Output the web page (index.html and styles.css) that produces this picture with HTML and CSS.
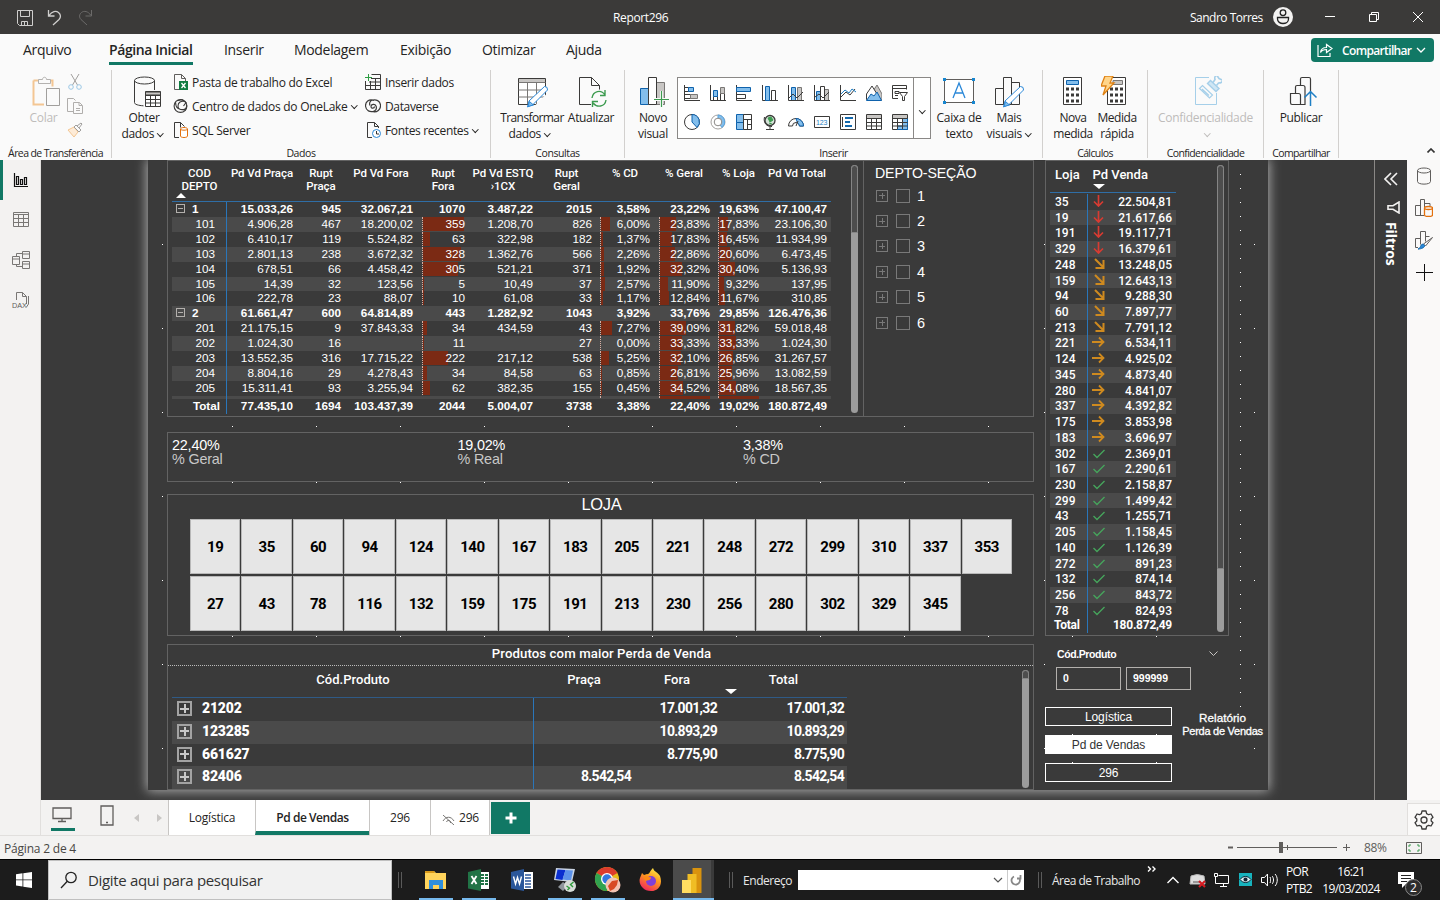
FILE: index.html
```html
<!DOCTYPE html>
<html lang="pt-BR">
<head>
<meta charset="utf-8">
<title>Report296</title>
<link rel="stylesheet" href="styles.css">
</head>
<body>
<div class="app">

<header class="titlebar">
  <svg class="quick" width="80" height="20" viewBox="0 0 80 20" fill="none" stroke="#d0cfce"><path d="M1.500 3.500h15v15h-13l-2-2zM4.500 3.500v6h9v-6M5.500 18.500v-4h6v4M8.500 15v3"/><path d="M32.500 3v6h6M33 8.500c3-4.500 7-5 9.500-3s2.500 5 .5 7L37 18" stroke-width="1.300"/><path d="M75.500 3v6h-6M75 8.500c-3-4.500-7-5-9.500-3s-2.500 5-.5 7L71 18" stroke="#6b6a69"/></svg>
  <span class="doc-name">Report296</span>
  <span class="user-name">Sandro Torres</span>
  <svg class="avatar" width="20" height="20" viewBox="0 0 20 20"><circle cx="10" cy="10" r="10" fill="#f3f2f1"/><circle cx="10" cy="5.700" r="2.800" fill="none" stroke="#222" stroke-width="1.300"/><path d="M4.500 10.500h11v1.500c0 6-11 6-11 0z" fill="none" stroke="#222" stroke-width="1.300"/></svg>
  <svg class="win-ctl" width="100" height="12" viewBox="0 0 100 12" fill="none" stroke="#fff"><path d="M0 5.500h10M44.500 3.500h7v7h-7zM46.500 3V1.500h7v7H52M88 1l10 10M98 1L88 11"/></svg>
</header>

<nav class="tabs">
  <span class="tab t1">Arquivo</span><span class="tab t2 active">Página Inicial</span><span class="tab t3">Inserir</span><span class="tab t4">Modelagem</span><span class="tab t5">Exibição</span><span class="tab t6">Otimizar</span><span class="tab t7">Ajuda</span>
  <button class="share"><svg width="16" height="16" viewBox="0 0 16 16" fill="none" stroke="#fff" stroke-width="1.200"><path d="M1 3v11.500h12V11M3.500 10.500c.5-4 3-5 6-5V2.500l5.500 4-5.500 4v-3c-3 0-4.500.5-6 3z"/></svg><span>Compartilhar</span><svg width="10" height="6" viewBox="0 0 10 6" fill="none" stroke="#fff" stroke-width="1.300"><path d="M1 1l4 4 4-4"/></svg></button>
</nav>

<section class="ribbon">
  <div class="group g1">
    <div class="tools">
      <div class="big off b-colar"><svg width="32" height="32" viewBox="0 0 32 32" fill="none"><path d="M4.500 4.500h19v6M15 28.500H4.500v-24" stroke="#f3c693" stroke-width="2"/><path d="M9.500 7.500v-4h4c0-3 4-3 4 0h4v4z" fill="#fafafa" stroke="#b4b2b0"/><path d="M17.500 12.500h13v17h-13z" fill="#fafafa" stroke="#a19f9d"/></svg><span>Colar</span></div>
      <div class="mini">
        <svg width="16" height="16" viewBox="0 0 16 16" fill="none" stroke="#a19f9d"><path d="M4 0l6.500 11M12 0L5.500 11"/><circle cx="4" cy="13" r="2.300" stroke="#9cc8e6"/><circle cx="12" cy="13" r="2.300" stroke="#9cc8e6"/></svg>
        <svg width="16" height="16" viewBox="0 0 16 16" fill="none" stroke="#b0aeac"><path d="M6 13.500H.5v-13h6l2 2M6.500 4.500h6l3 3v8h-9zM12 4.500v3h3M9 10.500h4M9 12.500h4"/></svg>
        <svg width="16" height="16" viewBox="0 0 16 16" fill="none"><path d="M1 8l6-3 4 5-4 5z" fill="#fdebd7" stroke="#f3c693"/><path d="M7 5l2-2 5 5-2 2zM10 4l4-3 1 1-3 4" stroke="#a19f9d"/></svg>
      </div>
    </div>
    <div class="caption">Área de Transferência</div>
  </div>

  <div class="group g2">
    <div class="tools">
      <div class="big b-obter"><svg width="32" height="32" viewBox="0 0 32 32" fill="none" stroke="#3b3a39"><ellipse cx="13.500" cy="4.500" rx="10" ry="3.500"/><path d="M3.500 4.500v22c0 2 4 3 9 3.300M23.500 4.500V14"/><path d="M14.500 15.500h15v15h-15z" fill="#fff"/><path d="M14.500 16h15v3h-15z" fill="#c8c6c4"/><path d="M14.500 19.500h15M14.500 23.500h15M14.500 27h15M19.500 19v11.500M24.500 19v11.500"/></svg><span>Obter</span><span>dados<i class="chev"></i></span></div>
      <div class="list l1">
        <div><svg width="16" height="16" viewBox="0 0 16 16" fill="none"><path d="M6 15.500H1.500V.5h7l4 4V7M8.500.5v4h4" stroke="#605e5c"/><path d="M6 7h9v9H6z" fill="#107c41"/><path d="M8.500 9l4 5M12.500 9l-4 5" stroke="#fff" stroke-width="1.300"/></svg><span>Pasta de trabalho do Excel</span></div>
        <div><svg width="16" height="16" viewBox="0 0 16 16" fill="none" stroke="#3b3a39" stroke-width="1.100"><circle cx="7.500" cy="8" r="6.400"/><path d="M2.500 4c0 6 3 8.500 10.500 8M12 3.500c-4-1-7 1-7 4.500s3 4 5.500 3.500S14 9 13.500 7M5 2.500l4-1 4 3-2.500 3.500"/></svg><span>Centro de dados do OneLake<i class="chev"></i></span></div>
        <div><svg width="16" height="16" viewBox="0 0 16 16" fill="none"><path d="M6 15.500H1.500V.5h6l4 4M7.500.5v5" stroke="#3b3a39"/><path d="M7.500 7v7c0 2 7 2 7 0V7c0-2-7-2-7 0c0 1.600 7 1.600 7 0" fill="#fff" stroke="#e3700c"/></svg><span>SQL Server</span></div>
      </div>
      <div class="list l2">
        <div><svg width="16" height="16" viewBox="0 0 16 16" fill="none" stroke="#3b3a39"><path d="M6.500.5h9v15H.5V7M6 4.500h9.500M4 8h11.500M.5 11.500h15M5.500 7v8.500M10.500 4v11.500"/><path d="M3.500 0v7M0 3.500h7" stroke="#2f9e44"/></svg><span>Inserir dados</span></div>
        <div><svg width="16" height="16" viewBox="0 0 16 16" fill="none" stroke="#3b3a39" stroke-width="1.200"><path d="M9 2.500C4 .5 0 4 .600 8.500S5 14 8 13.500s4-3 3-5.500-5-2-5 .5 3.500 2 3.500 0M7 13.500c5 1.500 9-2 8.500-6.500S11 1.500 8 2 4 5 5 7.500"/></svg><span>Dataverse</span></div>
        <div><svg width="16" height="16" viewBox="0 0 16 16" fill="none"><path d="M7 15.500H2.500V.5h7l4 4V6M9.500.5v4h4" stroke="#3b3a39"/><circle cx="11.500" cy="11.500" r="4" fill="#fff" stroke="#2b88d8"/><path d="M11.500 9v3h2.500" stroke="#333"/></svg><span>Fontes recentes<i class="chev"></i></span></div>
      </div>
    </div>
    <div class="caption">Dados</div>
  </div>

  <div class="group g3">
    <div class="tools">
      <div class="big b-transf"><svg width="32" height="32" viewBox="0 0 32 32" fill="none"><path d="M2.500 2.500h27v26h-27z" fill="#fff" stroke="#3b3a39"/><path d="M3 3h26v3H3z" fill="#c8c6c4"/><path d="M2.500 6.500h27M2.500 14h27M2.500 21h27M11.500 7v21M20.500 7v21" stroke="#797775"/><path d="M20 28.500l10-10V30H18z" fill="#fafafa"/><path d="M28.500 10.500q3.500 0 3 3.500L17 28.500 11.500 31l1.500-6z" fill="#fff" stroke="#2b88d8"/><path d="M12 30.500l1.500-5 4 3.500z" fill="#83beec" stroke="#2b88d8"/></svg><span>Transformar</span><span>dados<i class="chev"></i></span></div>
      <div class="big b-atual"><svg width="32" height="32" viewBox="0 0 32 32" fill="none"><path d="M16 28.500H4.500v-27h12l8 8v4M16.500 1.500v8h8" stroke="#3b3a39"/><path d="M17 22c1-7 9-9 13-3M30 14v5.500h-5M31 24c-1 7-9 8-13 3M17.500 31v-5.500H23" stroke="#3d9b50" stroke-width="1.400"/></svg><span>Atualizar</span></div>
    </div>
    <div class="caption">Consultas</div>
  </div>

  <div class="group g4">
    <div class="tools">
      <div class="big b-novo"><svg width="32" height="32" viewBox="0 0 32 32" fill="none"><path d="M3.500 12.500h8v16h-8z" fill="#83beec" stroke="#0f62ac"/><path d="M19.500 6.500h8v22h-8z" fill="#c8c6c4" stroke="#797775"/><path d="M11.500 1.500h8v27h-8z" fill="#fff" stroke="#3b3a39"/><path d="M24.500 15v16M17 23.500h15" stroke="#fafafa" stroke-width="3"/><path d="M24.500 15v16M17 23.500h15" stroke="#3d9b50" stroke-width="1.200"/></svg><span>Novo</span><span>visual</span></div>
      <div class="gallery">
        <div class="gal-grid" id="gallery"></div>
        <div class="gal-more"><i class="chev"></i></div>
      </div>
      <div class="big b-caixa"><svg width="32" height="32" viewBox="0 0 32 32" fill="none"><path d="M1.500 3.500h29v23h-29z" fill="#fff" stroke="#605e5c"/><path d="M0 2h3v3H0zM29 2h3v3h-3zM0 25h3v3H0zM29 25h3v3h-3z" fill="#1686d0"/><path d="M10 22l6-15 6 15M12 17h8" stroke="#2b88d8" stroke-width="1.300"/></svg><span>Caixa de</span><span>texto</span></div>
      <div class="big b-mais"><svg width="32" height="32" viewBox="0 0 32 32" fill="none" stroke="#3b3a39"><path d="M2.500 12.500h8v16h-8zM10.500 1.500h8v27h-8zM18.500 6.500h8v22h-8z" fill="#fafafa"/><path d="M27.500 10.500q3.500 0 3 3.500L16 28.500 10.500 31l1.500-6z" fill="#fff" stroke="#2b88d8"/><path d="M11 30.500l1.500-5 4 3.500z" fill="#83beec" stroke="#2b88d8"/></svg><span>Mais</span><span>visuais<i class="chev"></i></span></div>
    </div>
    <div class="caption">Inserir</div>
  </div>

  <div class="group g5">
    <div class="tools">
      <div class="big b-calc"><svg width="32" height="32" viewBox="0 0 32 32" fill="none"><path d="M6.500 1.500h18v27h-18z" fill="#fff" stroke="#3b3a39"/><path d="M9.500 4.500h12v4h-12z" fill="#83beec" stroke="#0f62ac"/><path d="M9 13h13M9 19h13M9 25h13" stroke="#3b3a39" stroke-width="3" stroke-dasharray="3 2"/></svg><span>Nova</span><span>medida</span></div>
      <div class="big b-calc"><svg width="32" height="32" viewBox="0 0 32 32" fill="none"><path d="M6.500 1.500h18v27h-18z" fill="#fff" stroke="#3b3a39"/><path d="M12 4.500h9.500v4H12z" fill="#c8c6c4" stroke="#797775"/><path d="M9 13h13M9 19h13M9 25h13" stroke="#3b3a39" stroke-width="3" stroke-dasharray="3 2"/><path d="M4 0h8l-3 7h4L2 19l3-9H0z" fill="#ffd58a" stroke="#e08214" stroke-width="1.300"/></svg><span>Medida</span><span>rápida</span></div>
    </div>
    <div class="caption">Cálculos</div>
  </div>

  <div class="group g6">
    <div class="tools">
      <div class="big off b-wide"><svg width="32" height="32" viewBox="0 0 32 32" fill="none" stroke="#a5cfe9"><path d="M19 1.500H5.500v27h21V17"/><path d="M9.500 12.500l3-3 10 9.500-3 3zM12 13l7 6.500" stroke-width="1.200"/><path d="M17.500 7.500l3-3 8.500 8-3 3z" fill="#cfe6f4" stroke-width="1.400"/><path d="M23 6.500l2-3q-1-3.500 2-4l2 3 3.500 1.500q0 3-4 3l-2 2.500" stroke-width="1.600"/></svg><span>Confidencialidade</span><span><i class="chev"></i></span></div>
    </div>
    <div class="caption">Confidencialidade</div>
  </div>

  <div class="group g7">
    <div class="tools">
      <div class="big b-wide b-pub"><svg width="32" height="32" viewBox="0 0 32 32" fill="none" stroke="#3b3a39" stroke-width="1.200"><path d="M14 28.500H3q-1.500 0-1.500-2V17.500h8q2 0 2 2v9M6.500 17V11q0-1.500 1.500-1.500h6q2 0 2 2V28.500H11M11.500 9V3q0-1.500 1.500-1.500h7q1.500 0 1.500 1.500v12"/><path d="M21.500 30V15M15.500 21.500l6-6 6 6" stroke="#1f7fc4" stroke-width="1.500"/></svg><span>Publicar</span></div>
    </div>
    <div class="caption">Compartilhar</div>
  </div>
  <svg class="collapse" width="8" height="5" viewBox="0 0 8 5" fill="none" stroke="#333" stroke-width="1.600"><path d="M.5 4.500L4 1l3.500 3.500"/></svg>
</section>

<main class="work">
  <aside class="rail-left">
    <div class="rail-item on"><svg width="16" height="16" viewBox="0 0 16 16" fill="none" stroke="#111" stroke-width="1.200"><path d="M1.500 1v13.500H15M3.500 4.500h2v8h-2zM7.500 7.500h2v5h-2zM11.500 5.500h2v7h-2z"/></svg></div>
    <div class="rail-item"><svg width="18" height="16" viewBox="0 0 18 16" fill="none" stroke="#797775"><path d="M1.500.5h15v14h-15zM1.500 2.500h15M1.500 6.500h15M1.500 10.500h15M6.500 2.500v12M11.500 2.500v12"/></svg></div>
    <div class="rail-item"><svg width="18" height="18" viewBox="0 0 18 18" fill="none" stroke="#797775"><path d="M.5 5.500h7v8h-7zM.5 8h7M10.500.5h7v7h-7zM10.500 3h7M10.500 10.500h7v7h-7zM10.500 13h7M4.500 5.500v-3h6M4.500 13.500v2h6"/></svg></div>
    <div class="rail-item"><svg width="18" height="18" viewBox="0 0 18 18" fill="none" stroke="#797775"><path d="M4.500 9V1.500h6l4 4V13M10.500 1.500v4h4M16.500 5v8l-2 3"/><text x="0" y="17" font-size="7" textLength="15" lengthAdjust="spacingAndGlyphs" font-family="Liberation Sans" fill="#605e5c" stroke="none">DAX</text></svg></div>
  </aside>

  <div class="canvas">
    <article class="page">
      <svg class="dots" width="1120" height="630"><defs>
        <pattern id="dx" width="84" height="630" patternUnits="userSpaceOnUse"><path d="M0 266h1v1H0zM0 322h1v1H0zM0 476h1v1H0z" fill="#fff"/></pattern>
        <pattern id="dy" width="1120" height="84" patternUnits="userSpaceOnUse"><path d="M14 0h1v1h-1zM714 0h1v1h-1zM896 0h1v1h-1zM1106 0h1v1h-1z" fill="#fff"/></pattern>
        <pattern id="dz" width="1120" height="14" patternUnits="userSpaceOnUse"><path d="M1092 0h1v1h-1z" fill="#fff"/></pattern></defs>
        <g><rect x="0" y="0" width="1009" height="546" fill="url(#dx)" transform="translate(84 0)"/><rect y="0" width="1120" height="546" fill="url(#dy)" transform="translate(0 84)"/><rect y="0" width="1120" height="546" fill="url(#dz)" transform="translate(0 14)"/><path d="M924 574h1v1h-1zM1008 574h1v1h-1zM924 602h1v1h-1zM1008 602h1v1h-1z" fill="#fff"/></g></svg>
      <div class="col-main">
        <section class="panel top-panel">
          <div class="matrix">
            <div class="m-row m-head"><span>COD<br>DEPTO<i class="tri up"></i></span><span>Pd Vd Praça</span><span>Rupt<br>Praça</span><span>Pd Vd Fora</span><span>Rupt<br>Fora</span><span>Pd Vd ESTQ<br>›1CX</span><span>Rupt<br>Geral</span><span>% CD</span><span>% Geral</span><span>% Loja</span><span>Pd Vd Total</span></div>
            <div class="m-body" id="matrix"></div>
            <div class="m-total" id="matrixTotal"></div>
          </div>
          <div class="scroll s1"><b></b></div>
          <div class="slicer">
            <div class="slicer-title">DEPTO-SEÇÃO</div>
            <div class="s-item"><em></em><u></u>1</div><div class="s-item"><em></em><u></u>2</div><div class="s-item"><em></em><u></u>3</div><div class="s-item"><em></em><u></u>4</div><div class="s-item"><em></em><u></u>5</div><div class="s-item"><em></em><u></u>6</div>
          </div>
        </section>
        <section class="panel cards">
          <div><b>22,40%</b><span>% Geral</span></div><div><b>19,02%</b><span>% Real</span></div><div><b>3,38%</b><span>% CD</span></div>
        </section>
        <section class="panel tiles-panel"><h3>LOJA</h3><div class="tiles" id="tiles"></div></section>
        <section class="panel prod-panel">
          <h4>Produtos com maior Perda de Venda</h4>
          <div class="prod-wrap">
            <div class="prod">
              <div class="p-row p-head"><span>Cód.Produto</span><span>Praça</span><span>Fora</span><span>Total<i class="tri"></i></span></div>
              <div class="p-row"><span><em class="plus"></em>21202</span><span></span><span>17.001,32</span><span>17.001,32</span></div>
              <div class="p-row band"><span><em class="plus"></em>123285</span><span></span><span>10.893,29</span><span>10.893,29</span></div>
              <div class="p-row"><span><em class="plus"></em>661627</span><span></span><span>8.775,90</span><span>8.775,90</span></div>
              <div class="p-row band"><span><em class="plus"></em>82406</span><span>8.542,54</span><span></span><span>8.542,54</span></div>
            </div>
            <div class="scroll s3"><b></b></div>
          </div>
        </section>
      </div>
      <div class="col-side">
        <section class="panel loja-panel">
          <div class="loja">
            <div class="l-head"><span>Loja</span><span>Pd Venda<i class="tri"></i></span></div>
            <div class="l-body" id="loja"></div>
            <div class="l-total"><span>Total</span><span>180.872,49</span></div>
          </div>
          <div class="scroll s2"><b></b></div>
        </section>
        <section class="range"><div class="range-title"><span>Cód.Produto</span><svg width="9" height="6" viewBox="0 0 9 6" fill="none" stroke="#c8c6c4"><path d="M.5.500l4 4 4-4"/></svg></div><div class="range-boxes"><div>0</div><div>999999</div></div></section>
        <section class="nav-area"><div class="nav-btns"><div>Logística</div><div class="sel">Pd de Vendas</div><div>296</div></div><div class="nav-title">Relatório<br><small>Perda de Vendas</small></div></section>
      </div>
    </article>
  </div>

  <aside class="filters">
    <svg width="14" height="14" viewBox="0 0 14 14" fill="none" stroke="#f3f2f1" stroke-width="1.600"><path d="M7 1L1 7l6 6M13 1L7 7l6 6"/></svg>
    <svg width="13" height="13" viewBox="0 0 13 13" fill="none" stroke="#f3f2f1" stroke-width="1.600"><path d="M12 1v11L6 8.300H1V4.700h5z"/></svg>
    <span>Filtros</span>
  </aside>
  <aside class="rail-right">
    <svg width="16" height="18" viewBox="0 0 16 18" fill="none" stroke="#605e5c"><ellipse cx="8" cy="3.500" rx="6.500" ry="2.500"/><path d="M1.500 3.500v11c0 3.500 13 3.500 13 0v-11"/></svg>
    <svg width="18" height="18" viewBox="0 0 18 18" fill="none" stroke="#605e5c"><path d="M9 16.500H.5v-10h5v10M5.500 7V.5h4v16M10 4.500h5V7"/><path d="M9.500 9v7c0 2 8 2 8 0V9c0-2-8-2-8 0c0 2 8 2 8 0" fill="#faf9f8" stroke="#e3700c" stroke-width="1.300"/></svg>
    <svg width="18" height="19" viewBox="0 0 18 19" fill="none" stroke="#605e5c"><path d="M3 16.500H.5v-9h5v6M5.500 8V.5h5v10M10.500 5.500h4"/><path d="M17.500 6.500l-7 8.500-2-2z" fill="#fff"/><path d="M3 18c3 0 2-5 5-5 4 2 0 5-5 5z" fill="#2b88d8" stroke="#1469ad"/></svg>
    <svg width="17" height="17" viewBox="0 0 17 17" stroke="#111"><path d="M8.500 0v17M0 8.500h17"/></svg>
  </aside>
</main>

<footer class="pagebar">
  <div class="pb-left"></div>
  <div class="pb-icons">
    <svg width="20" height="16" viewBox="0 0 20 16" fill="none" stroke="#605e5c" stroke-width="1.300"><path d="M1 1h18v10.500H1zM10 12v2M6 14.500h8"/></svg>
    <svg width="14" height="21" viewBox="0 0 14 21" fill="none" stroke="#605e5c" stroke-width="1.300"><path d="M1 1h12v19H1z"/><path d="M6 17.500h2"/></svg>
    <svg width="28" height="8" viewBox="0 0 28 8" fill="#c8c6c4"><path d="M5 0v8L0 4zM23 0v8l5-4z"/></svg>
  </div>
  <div class="ptab w1">Logística</div><div class="ptab w2 cur">Pd de Vendas</div><div class="ptab w3">296</div><div class="ptab w4"><svg width="13" height="10" viewBox="0 0 13 10" fill="none" stroke="#797775"><path d="M1 0l11 10M1 6c3-5 8-5 11 0M4.500 7a2 2 0 1 1 4 1"/></svg>296</div>
  <div class="add"><svg width="12" height="12" viewBox="0 0 12 12" stroke="#fff" stroke-width="3"><path d="M6 .500v11M.500 6h11"/></svg></div>
  <div class="gear"><svg width="20" height="20" viewBox="0 0 20 20" fill="none" stroke="#3b3a39" stroke-width="1.300" stroke-linejoin="round"><path d="M8 1h4l.6 2.600 2 1.100L17 4l2 3.300L17.200 9v2L19 12.700 17 16l-2.400-.7-2 1.100L12 19H8l-.6-2.600-2-1.100L3 16l-2-3.300L2.800 11V9L1 7.300 3 4l2.400.7 2-1.100z"/><circle cx="10" cy="10" r="3"/></svg></div>
</footer>

<div class="status"><span class="pg">Página 2 de 4</span>
  <svg class="zoomctl" width="122" height="12" viewBox="0 0 122 12" stroke="#605e5c" fill="none"><path d="M0 6.500h5" stroke-width="2"/><path d="M9 6.500h100M59.500 4v5M115 6.500h7M118.500 3v7"/><path d="M51 1h4v11h-4z" fill="#605e5c" stroke="none"/></svg>
  <span class="pct">88%</span>
  <svg width="16" height="12" viewBox="0 0 16 12" fill="none" stroke="#605e5c"><path d="M.5.500h15v11H.500z"/><path d="M3 5V3h2M11 3h2v2M13 7v2h-2M5 9H3V7" stroke="#3d9b50"/></svg>
</div>

<div class="taskbar">
  <div class="start"><svg width="16" height="16" viewBox="0 0 16 16" fill="#fff"><path d="M0 2.200l6.500-.9v6.200H0zM7.300 1.200L16 0v7.500H7.300zM0 8.300h6.500v6.200L0 13.600zM7.300 8.300H16V16l-8.700-1.300z"/></svg></div>
  <div class="search"><svg width="18" height="18" viewBox="0 0 18 18" fill="none" stroke="#222" stroke-width="1.300"><circle cx="11" cy="6.500" r="5.200"/><path d="M7.300 10.300L1 17"/></svg><span>Digite aqui para pesquisar</span></div>
  <i class="grip g-a"></i>
  <div class="apps">
    <div class="run"><svg width="24" height="24" viewBox="0 0 24 24"><path d="M1 3h9l2 2h10v16H1z" fill="#ffd45c"/><path d="M1 3h9l1 2H1z" fill="#d99a1b"/><path d="M5 12h14v9h-4v-4H9v4H5z" fill="#2f8fdd"/></svg></div>
    <div class="run"><svg width="24" height="24" viewBox="0 0 24 24"><path d="M12 4h10v17H12z" fill="#fff"/><path d="M14 6h3v2h-3zM18 6h3v2h-3zM14 9h3v2h-3zM18 9h3v2h-3zM14 12h3v2h-3zM18 12h3v2h-3zM14 15h3v2h-3zM18 15h3v2h-3z" fill="#217346"/><path d="M1 4l13-3v22L1 20.500z" fill="#217346"/><path d="M4.500 8l5 8M9.500 8l-5 8" stroke="#fff" stroke-width="1.800"/></svg></div>
    <div><svg width="24" height="24" viewBox="0 0 24 24"><path d="M12 4h11v17H12z" fill="#fff"/><path d="M15 7h6M15 10h6M15 13h6M15 16h6M15 19h6" stroke="#2b579a" stroke-width="1.400"/><path d="M1 4l13-3v22L1 20.500z" fill="#2b579a"/><path d="M3.500 8.500L5.500 16l2-6.500 2 6.500 2-7.500" fill="none" stroke="#fff" stroke-width="1.400"/></svg></div>
    <div class="run"><svg width="24" height="26" viewBox="0 0 24 26"><path d="M3 1l19 1-3 13L1 13z" fill="#c9d4e4"/><path d="M4.500 2.500l8 .5-3 10-7-1z" fill="#0a2fd0"/><path d="M12.500 3l7.500.5-2 10-8.500-1z" fill="#5c92ea"/><path d="M5 20l5-5 5 4-5 5z" fill="#8f959b"/><circle cx="17" cy="19" r="6" fill="#d8dcd8"/><path d="M13.500 19l3 2-2 2M20.500 15l-3 2.500 2.500 2.500" fill="none" stroke="#2e9a3a" stroke-width="1.400"/></svg></div>
    <div class="run two"><svg width="28" height="28" viewBox="0 0 28 28"><circle cx="13" cy="13" r="12" fill="#e8b91c"/><path d="M13 13L2.600 7A12 12 0 0 1 23.400 7z" fill="#dd3b2d"/><path d="M13 13L2.600 7A12 12 0 0 0 13 25z" fill="#31a350"/><circle cx="13" cy="13" r="6" fill="#fff"/><circle cx="13" cy="13" r="4.700" fill="#3577e0"/><circle cx="19" cy="19" r="7.500" fill="#f3c3b3"/><path d="M18 15l6-1-1 5-3 4-4 2-2-5z" fill="#d84a24"/></svg></div>
    <div><svg width="24" height="24" viewBox="0 0 24 24"><defs><linearGradient id="ff" x1=".8" y1="0" x2=".3" y2="1"><stop offset="0" stop-color="#fff04a"/><stop offset=".45" stop-color="#ff9a1f"/><stop offset="1" stop-color="#f0265c"/></linearGradient></defs><path d="M3 5l2 2 3-1c2 1 3-3 6-6 1 4 5 4 7 8 3 8-1 15-9 15S-1 16 1 10z" fill="url(#ff)"/><circle cx="12" cy="13" r="5" fill="#8040d8"/><path d="M4 9c4-2 6 1 8 0 0 4-4 3-5 4z" fill="#ff8a16"/></svg></div>
    <div class="run cur"><svg width="20" height="25" viewBox="0 0 20 25"><path d="M10.500 0h9v25h-9z" fill="#d9930e"/><path d="M5.500 6h9v19h-9z" fill="#f0bd24"/><path d="M0 12h9v13H0z" fill="#ffdd61"/></svg></div>
  </div>
  <i class="grip g-b"></i>
  <span class="tb-label addr">Endereço</span>
  <div class="addr-box"><svg width="10" height="6" viewBox="0 0 10 6" fill="none" stroke="#555" stroke-width="1.200"><path d="M1 1l4 4 4-4"/></svg><b><svg width="12" height="12" viewBox="0 0 12 12" fill="none" stroke="#888" stroke-width="1.800"><path d="M4 2.500a4.200 4.200 0 1 0 5.500 2M7 4.500h3.500V1"/></svg></b></div>
  <i class="grip g-c"></i>
  <span class="tb-label desk">Área de Trabalho</span>
  <svg class="more" width="10" height="6" viewBox="0 0 10 6" fill="none" stroke="#fff" stroke-width="1.400"><path d="M1 .500L3.500 3 1 5.500M5.500.500L8 3 5.500 5.500"/></svg>
  <svg class="tray" width="104" height="18" viewBox="0 0 104 18" fill="none" stroke="#fff"><path d="M.5 12L6 6.500l5.500 5.500" stroke-width="1.400"/><path d="M24 5q6-3 13 0l1 8H23z" fill="#ddd" stroke="#bbb"/><path d="M26 11h8" stroke="#555"/><path d="M32 10l6 6M38 10l-6 6" stroke="#d61a20" stroke-width="2"/><path d="M51.500 4.500h10v8h-13v-4M53 15.500h7M56.500 13v2M47.500 2.500h3v3h-3zM48.500 6v3"/><path d="M72 2h13v13H72z" fill="#17b3bd" stroke="none"/><path d="M73 8.500c3-4 8-4 11 0-3 4-8 4-11 0z" fill="#d8f1f3" stroke="#123"/><circle cx="78.500" cy="8.500" r="2" fill="#123" stroke="none"/><path d="M94.500 6.500h3l3-3.500v12l-3-3.500h-3zM103 6c1 2 1 4 0 6"/></svg>
  <svg class="waves" width="8" height="14" viewBox="0 0 8 14" fill="none" stroke="#fff"><path d="M0 3c2 2 2 6 0 8M3 1c3 3 3 9 0 12"/></svg>
  <div class="clock lang">POR<br>PTB2</div>
  <div class="clock">16:21<br>19/03/2024</div>
  <div class="notif"><svg width="18" height="16" viewBox="0 0 18 16"><path d="M0 0h16v12h-8l-4 4v-4H0z" fill="#fff"/><path d="M3 3.500h10M3 6.500h10M3 9.500h6" stroke="#222"/></svg><b>2</b></div>
</div>
</div>
<script src="app.js"></script>
</body>
</html>
```
FILE: styles.css
```css
* { box-sizing: border-box; }
body { margin: 0; font-family: "Open Sans", "Noto Sans", sans-serif; color: #252423; }
svg { display: block; flex: none; }
i, em, u { font-style: normal; text-decoration: none; }
.app { width: 1440px; height: 900px; overflow: hidden; display: flex; flex-direction: column; background: #fafafa; }
.app > * { flex: none; }

/* title bar */
.titlebar { height: 34px; background: #3b3a39; display: flex; align-items: center; color: #fff; font-size: 12px; letter-spacing: -.35px; }
.quick { margin-left: 16px; margin-top: -1px; }
.doc-name { margin-left: 517px; width: 577px; padding-top: 1px; }
.user-name { width: 83px; white-space: nowrap; padding-top: 1px; letter-spacing: -.5px; }
.win-ctl { margin-left: 32px; }

/* ribbon tabs */
.tabs { height: 32px; display: flex; font-size: 14px; position: relative; padding-left: 23px; letter-spacing: -.32px; }
.tab { height: 31px; line-height: 32px; white-space: nowrap; }
.tab.active { font-weight: 600; border-bottom: 3px solid #117865; letter-spacing: -.4px; }
.t1 { width: 86px; } .t2 { width: 84px; margin-right: 31px; } .t3 { width: 70px; } .t4 { width: 106px; } .t5 { width: 82px; } .t6 { width: 84px; }
.share { position: absolute; left: 1311px; top: 4px; width: 123px; height: 24px; border: 0; border-radius: 4px; background: #117865; color: #fff; display: flex; align-items: center; padding: 0 0 0 6px; font: 600 12px "Open Sans", sans-serif; letter-spacing: -.65px; }
.share span { width: 74px; margin-left: 9px; text-align: left; white-space: nowrap; }

/* ribbon */
.ribbon { height: 94px; display: flex; position: relative; font-size: 12px; letter-spacing: -.2px; padding-top: 4px; }
.group { height: 88px; border-right: 1px solid #d2d0ce; }
.g1 { width: 112px; } .g2 { width: 379px; } .g3 { width: 134px; } .g4 { width: 418px; } .g5 { width: 105px; } .g6 { width: 116px; } .g7 { width: 75px; }
.tools { height: 77px; display: flex; padding-top: 6px; }
.caption { height: 13px; line-height: 13px; font-size: 10.500px; text-align: center; white-space: nowrap; letter-spacing: -.6px; }
.g2 .caption, .g3 .caption, .g4 .caption { letter-spacing: -.4px; }
.big { display: flex; flex-direction: column; align-items: center; line-height: 16px; letter-spacing: -.32px; }
.big svg { margin-bottom: 2px; }
.big span { white-space: nowrap; }
.off { color: #bebcba; }
.chev { display: inline-block; width: 4.500px; height: 4.500px; border: solid currentColor; border-width: 0 1.500px 1.500px 0; transform: rotate(45deg); margin: 0 1px 3px 4px; }
.g1 .b-colar { width: 55px; margin-left: 16px; }
.b-colar svg { margin-left: 2px; }
.mini { display: flex; flex-direction: column; gap: 8px; margin-left: -4px; margin-top: -2px; }
.b-obter { width: 64px; }
.b-obter svg { margin-left: 5px; }
.b-obter span:last-child { margin-left: -3px; }
.b-transf { letter-spacing: -.6px; }
.b-transf span:last-child { margin-left: -5px; letter-spacing: -.4px; }
.b-pub svg { margin-left: 7px; }
.list { display: flex; flex-direction: column; margin-top: -6px; white-space: nowrap; letter-spacing: -.28px; }
.list > div { height: 24px; display: flex; align-items: center; gap: 3px; }
.l1 { margin-left: -3px; width: 192px; }
.l2 > div { gap: 4px; }
.l2 { letter-spacing: -.35px; }
.b-transf { width: 82px; } .b-atual { width: 36px; }
.b-novo { width: 48px; margin-left: 4px; }
.b-caixa { width: 56px; } .b-mais { width: 44px; }
.g5 .tools { padding-left: 8px; } .b-calc { width: 44px; letter-spacing: -.45px; }
.b-wide { width: 100%; }
.gallery { width: 254px; height: 62px; margin-top: 1px; border: 1px solid #8a8886; background: #fff; display: flex; }
.gal-grid { width: 236px; display: grid; grid-template-columns: repeat(9, 26px); grid-template-rows: 29px 29px; padding-left: 1px; padding-top: 0; place-items: center; }
.gal-more { border-left: 1px solid #8a8886; width: 17px; display: grid; place-items: center; }
.gal-more .chev { margin: 4px 0 0; }
.collapse { position: absolute; left: 1427px; top: 82px; }

/* work area */
.work { height: 640px; display: flex; background: #3a3a3a; }
.rail-left { width: 41px; background: #f3f2f1; border-right: 1px solid #e1dfdd; }
.rail-item { height: 40px; display: grid; place-items: center; padding-left: 1px; }
.rail-item.on { border-left: 3px solid #117865; padding: 0 2px 0 0; }
.canvas { width: 1334px; overflow: hidden; padding-left: 107px; border-right: 1px solid #8a8886; }
.page { width: 1120px; height: 630px; background: #3a3a3a; box-shadow: 0 0 11px 1px #b0b0b0; position: relative; display: flex; padding-left: 19px; gap: 11px; color: #fff; }
.dots { position: absolute; left: 0; top: 0; }
.panel { border: 1px solid #636363; background: #3a3a3a; position: relative; }
.col-main { width: 867px; }
.col-side { width: 223px; flex: none; }
.top-panel { height: 257px; display: flex; }
.matrix { width: 664px; padding-left: 4px; }
.m-row, .m-total { display: grid; grid-template-columns: 55px 70px 48px 72px 52px 68px 59px 58px 60px 49px 68px; width: 659px; }
.m-head { height: 41px; padding-top: 6px; border-bottom: 1px solid #2f6ea6; font: 500 11.500px/13px Roboto, sans-serif; text-align: center; letter-spacing: -.05px; }
.m-head span { position: relative; white-space: nowrap; }
.tri { position: absolute; border: solid transparent; border-width: 5px 5px 0; border-top-color: #fff; }
.tri.up { border-width: 0 5px 5px; border-bottom-color: #fff; left: 4px; top: 26px; }
.m-body { height: 197px; overflow: hidden; }
.m-body, .m-total { font: 11.730px/14.920px "Liberation Sans", sans-serif; }
.m-body .m-row { height: 14.920px; }
.m-row.band, .p-row.band, .l-row.band { background: #4a4a4a; }
.m-row > b, .m-total > b { font-weight: inherit; text-align: right; padding-right: 4px; position: relative; }
.m-row > b:first-child, .m-total > b:first-child { border-right: 1px solid #2a76ba; padding-right: 11px; }
.m-row.grp { font-weight: 700; }
.m-row.grp > b:first-child { text-align: left; padding: 0 0 0 20px; }
.m-total { font-weight: 700; height: 14px; }
.m-total > b:first-child { padding-right: 6px; }
.minus { position: absolute; left: 4px; top: 2px; width: 9px; height: 9px; border: 1px solid #b3b0ad; background: linear-gradient(#b3b0ad, #b3b0ad) 1px 3px / 5px 1px no-repeat; }
.bar { position: absolute; left: 4px; top: 0; height: 14px; border-left: 1px dotted #d8b0a4; }
.bar s { display: block; height: 14px; background: #7b2a14; }
.bar.wide { left: 5px; }
.cell-v { position: relative; }
.scroll { width: 7px; border-radius: 4px; background: #9c9c9c; overflow: hidden; }
.scroll b { display: block; background: #4d4d4d; border: 1px solid #858585; border-radius: 4px 4px 0 0; }
.s1 { height: 248px; margin: 4px 0 0 19px; } .s1 b { height: 68px; }
.slicer { border-left: 1px solid #636363; margin-left: 5px; flex: 1; padding-left: 11px; font: 14.500px/16px "Liberation Sans", sans-serif; }
.slicer-title { height: 22px; padding-top: 4px; font-size: 14.200px; white-space: nowrap; letter-spacing: -.15px; }
.s-item { height: 25.400px; display: flex; align-items: center; }
.s-item em { width: 12px; height: 12px; border: 1px solid #797979; margin-left: 1px; background: linear-gradient(#797979,#797979) 50% 50% / 6px 1px no-repeat, linear-gradient(#797979,#797979) 50% 50% / 1px 6px no-repeat; }
.s-item u { width: 14px; height: 14px; border: 1px solid #797979; margin: 0 7px 0 8px; }
.cards { height: 50px; margin-top: 15px; display: flex; font: 14.400px/14px "Liberation Sans", sans-serif; padding: 5px 0 0 4px; letter-spacing: -.2px; }
.cards div { width: 285.500px; }
.cards b { display: block; font-weight: 400; }
.cards span { color: #c8c8c8; }
.tiles-panel { height: 142px; margin-top: 12px; }
.tiles-panel h3 { margin: 0; height: 24px; font: 16.500px/18px "Liberation Sans", sans-serif; text-align: center; padding-left: 2px; letter-spacing: -.3px; }
.tiles { display: grid; grid-template-columns: repeat(16, 51.450px); grid-auto-rows: 55px; row-gap: 2px; margin-left: 22px; }
.tiles div { margin-right: 1px; background: #e6e6e6; border: 1px solid #b8b8b8; color: #000; display: grid; place-items: center; font: 700 15px Roboto, sans-serif; letter-spacing: -.45px; }
.prod-panel { height: 146px; margin-top: 8px; overflow: hidden; }
.prod-panel h4 { margin: 0; height: 21px; border-bottom: 1px dotted #bbb; font: 500 13.200px/17px Roboto, sans-serif; text-align: center; padding-left: 2px; letter-spacing: .1px; }
.prod-wrap { display: flex; padding-left: 4px; }
.prod { width: 675px; }
.p-row { display: grid; grid-template-columns: 362px 100px 86px 127px; height: 22.800px; font: 700 14px/21px Roboto, sans-serif; letter-spacing: -.7px; }
.p-row span { text-align: right; padding-right: 3px; position: relative; }
.p-row > span:first-child { text-align: left; padding-left: 30px; border-right: 1px solid #2a76ba; font-weight: 900; letter-spacing: -.2px; }
.p-head { height: 32px; border-bottom: 1px solid #2f5a86; font: 500 13px/27px Roboto, sans-serif; letter-spacing: 0; }
.p-head span, .p-head > span:first-child { text-align: center; padding: 0; border: 0; font-weight: 500; letter-spacing: .05px; }
.p-head .tri { left: 5px; top: 23px; border-width: 5px 6px 0; }
.plus { position: absolute; left: 5px; top: 3px; width: 15px; height: 15px; border: 2px solid #a3a3a3; background: linear-gradient(#c8c8c8,#c8c8c8) 50% 50% / 9px 2px no-repeat, linear-gradient(#c8c8c8,#c8c8c8) 50% 50% / 2px 9px no-repeat; }
.s3 { height: 118px; margin: 4px 0 0 175px; } .s3 b { height: 9px; }
.loja-panel { width: 184px; height: 476px; display: flex; padding-left: 4px; }
.loja { width: 126px; font: 500 12px/15.730px Roboto, sans-serif; }
.l-head { height: 32px; border-bottom: 1px solid #2f6ea6; font-size: 13px; line-height: 28px; display: flex; padding-left: 5px; }
.l-head span { width: 37.500px; position: relative; white-space: nowrap; }
.l-head .tri { left: 0; top: 23px; border-width: 5px 6px 0; }
.l-body { padding-top: 1px; }
.l-row { display: grid; grid-template-columns: 38px 22px 1fr; height: 15.730px; }
.l-row > * { padding-top: 1px; }
.l-row > :first-child { border-right: 1px solid #2a76ba; padding-left: 5px; }
.l-row > :last-child { text-align: right; padding-right: 4px; }
.l-row svg { padding: 0; margin: 0 0 0 4px; }
.l-total { display: flex; font: 700 12px/14px Roboto, sans-serif; height: 15px; letter-spacing: -.25px; }
.l-total span:first-child { width: 38px; padding-left: 4px; border-right: 1px solid #2a76ba; }
.l-total span:last-child { flex: 1; text-align: right; padding-right: 4px; }
.s2 { height: 467px; margin: 4px 0 0 41px; } .s2 b { height: 404px; }
.range { padding: 10px 0 0 12px; height: 71px; position: relative; font: 700 10.500px/16px "Liberation Sans", sans-serif; }
.range-title { display: flex; justify-content: space-between; align-items: center; width: 161px; letter-spacing: -.4px; }
.range-boxes { display: flex; gap: 5px; margin: 5px 0 0 -1px; }
.range-boxes div { width: 65px; height: 23px; border: 1px solid #b3b0ad; padding: 2px 6px; font-size: 10.500px; }
.nav-area { display: flex; position: relative; }
.nav-btns { width: 127px; flex: none; display: flex; flex-direction: column; gap: 9px; }
.nav-btns div { height: 19px; border: 1px solid #fff; background: #3a3a3a; text-align: center; font: 12px/18px "Liberation Sans", sans-serif; letter-spacing: -.1px; }
.nav-btns .sel { background: #fff; color: #333; }
.nav-title { width: 101px; flex: none; text-align: center; font: 11.700px/13px "Liberation Sans", sans-serif; padding-top: 4px; white-space: nowrap; -webkit-text-stroke: .3px #fff; }
.nav-title small { font-size: 11px; letter-spacing: -.25px; }
.filters { width: 32px; display: flex; flex-direction: column; align-items: center; padding-top: 12px; color: #fff; }
.filters svg + svg { margin-top: 15px; margin-left: 4px; }
.filters span { writing-mode: vertical-rl; font: 700 14px/18px "Open Sans", sans-serif; margin-top: 8px; letter-spacing: -.1px; }
.rail-right { width: 33px; background: #faf9f8; display: flex; flex-direction: column; align-items: center; padding: 7px 0 0 1px; gap: 14px; }

/* page tabs */
.pagebar { height: 36px; background: #f3f2f1; border-bottom: 1px solid #e1dfdd; display: flex; font-size: 12px; }
.pb-left { width: 41px; border-right: 1px solid #e1dfdd; }
.pb-icons { width: 127px; display: flex; padding-left: 10px; }
.pb-icons svg { margin-top: 7px; }
.pb-icons svg:nth-child(1) { box-sizing: content-box; border-bottom: 3px solid #117865; padding: 0 3px 5px 1px; }
.pb-icons svg:nth-child(2) { margin: 5px 20px 0 25px; }
.pb-icons svg:nth-child(3) { margin-top: 14px; }
.ptab { background: #fff; border-left: 1px solid #c8c6c4; line-height: 35px; text-align: center; letter-spacing: -.2px; }
.w1 { width: 87px; } .w2 { width: 114px; } .w3 { width: 61px; } .w4 { width: 60px; display: flex; padding-left: 11px; gap: 4px; border-right: 1px solid #c8c6c4; }
.w4 svg { margin-top: 15px; }
.cur.ptab { font-weight: 600; border-bottom: 4px solid #117865; letter-spacing: -.45px; }
.add { width: 39px; height: 32px; margin: 2px 0 0 1px; background: #117865; display: grid; place-items: center; }
.gear { margin-left: auto; width: 33px; background: #faf9f8; border: solid #e1dfdd; border-width: 1px 0 0 1px; margin-top: 3px; display: grid; place-items: center; }

/* status */
.status { height: 23px; background: #f3f2f1; display: flex; align-items: center; font-size: 12px; color: #484644; letter-spacing: -.2px; }
.pg { width: 1228px; padding-left: 4px; padding-top: 2px; }
.zoomctl { margin-top: -1px; }
.pct { margin: 0 0 0 14px; width: 42px; color: #605e5c; letter-spacing: -.4px; }

/* taskbar */
.taskbar { height: 41px; background: #1c1c1c; border-top: 1px solid #000; display: flex; align-items: center; color: #fff; position: relative; }
.start { width: 48px; display: grid; place-items: center; }
.search { width: 344px; height: 40px; background: #f1f1f1; border: 1px solid #c0c0c0; color: #333; display: flex; align-items: center; padding-left: 11px; gap: 10px; font-size: 15px; letter-spacing: -.33px; }
.grip { width: 4px; height: 16px; border: solid #5a5a5a; border-width: 0 1px; }
.g-a { margin-left: 6px; }
.apps { display: flex; height: 40px; margin-left: 13px; width: 299px; }
.apps div { width: 43px; height: 40px; display: grid; place-items: center; position: relative; padding-right: 1px; }
.apps .run::after { content: ""; position: absolute; left: 4px; right: 5px; bottom: 0; height: 2px; background: #76b9ed; }
.apps .cur { background: #4b4b4b; border-right: 3px solid #3a3a3a; width: 41px; }
.apps .cur::after { left: 0; right: -3px; }
.g-b { margin-left: 15px; }
.tb-label { font-size: 12px; letter-spacing: -.2px; color: #e8e8e8; white-space: nowrap; }
.addr { margin-left: 10px; width: 55px; letter-spacing: -.45px; }
.addr-box { width: 226px; height: 20px; background: #fff; display: flex; align-items: center; justify-content: flex-end; gap: 4px; }
.addr-box b { width: 17px; height: 20px; border-left: 1px solid #ccc; display: grid; place-items: center; }
.g-c { margin-left: 14px; }
.desk { margin-left: 10px; width: 95px; letter-spacing: -.5px; }
.more { margin-top: -22px; }
.tray { margin-left: 10px; }
.waves { margin-left: 1px; width: 8px; }
.clock { font-size: 12px; line-height: 17.500px; text-align: center; width: 64px; margin-left: 3px; letter-spacing: -.6px; }
.clock.lang { width: 30px; margin-left: 6px; text-align: left; white-space: nowrap; }
.notif { position: relative; margin-left: 15px; }
.notif b { position: absolute; left: 7px; top: 7px; width: 17px; height: 17px; border: 1px solid #888; border-radius: 50%; background: #2c2c2c; font: 12px/15px "Open Sans", sans-serif; text-align: center; }
```
FILE: app.js
```javascript
// Matrix rows: code followed by the ten measures; one-digit codes are group rows.
const matrix = [
  "1 15.033,26 945 32.067,21 1070 3.487,22 2015 3,58% 23,22% 19,63% 47.100,47",
  "101 4.906,28 467 18.200,02 359 1.208,70 826 6,00% 23,83% 17,83% 23.106,30",
  "102 6.410,17 119 5.524,82 63 322,98 182 1,37% 17,83% 16,45% 11.934,99",
  "103 2.801,13 238 3.672,32 328 1.362,76 566 2,26% 22,86% 20,60% 6.473,45",
  "104 678,51 66 4.458,42 305 521,21 371 1,92% 32,32% 30,40% 5.136,93",
  "105 14,39 32 123,56 5 10,49 37 2,57% 11,90% 9,32% 137,95",
  "106 222,78 23 88,07 10 61,08 33 1,17% 12,84% 11,67% 310,85",
  "2 61.661,47 600 64.814,89 443 1.282,92 1043 3,92% 33,76% 29,85% 126.476,36",
  "201 21.175,15 9 37.843,33 34 434,59 43 7,27% 39,09% 31,82% 59.018,48",
  "202 1.024,30 16 - 11 - 27 0,00% 33,33% 33,33% 1.024,30",
  "203 13.552,35 316 17.715,22 222 217,12 538 5,25% 32,10% 26,85% 31.267,57",
  "204 8.804,16 29 4.278,43 34 84,58 63 0,85% 26,81% 25,96% 13.082,59",
  "205 15.311,41 93 3.255,94 62 382,35 155 0,45% 34,52% 34,08% 18.567,35"
];
const barMax = { 4: [359, 41], 7: [7.27, 11], 8: [39.09, 26], 9: [39.09, 20] };
const num = s => parseFloat(s.replace(".", "").replace(",", "."));
const makeBar = (i, w) => `<span class="bar${i === 4 || i === 8 ? " wide" : ""}"><s style="width:${w.toFixed(1)}px"></s></span>`;
const cells = (line, group) => line.split(" ").map((v, i) => {
  const bar = !group && barMax[i] ? makeBar(i, num(v) / barMax[i][0] * barMax[i][1]) : "";
  const sign = group && i === 0 && v.length === 1 ? '<i class="minus"></i>' : "";
  return `<b>${sign}${bar}<span class="cell-v">${v === "-" ? "" : v}</span></b>`;
}).join("");
// The last row is only a sliver above the total: bars without values.
const sliver = { 7: 0, 8: 50, 9: 40 };
const lastRow = Array.from({ length: 11 }, (_, i) => `<b>${i in sliver ? makeBar(i, sliver[i]) : ""}</b>`).join("");
document.getElementById("matrix").innerHTML = matrix.map((l, i) => {
  const group = l.indexOf(" ") === 1;
  return `<div class="m-row${group ? " grp" : ""}${i % 2 ? " band" : ""}">${cells(l, group)}</div>`;
}).join("") + `<div class="m-row band">${lastRow}</div>`;
document.getElementById("matrixTotal").innerHTML =
  cells("Total 77.435,10 1694 103.437,39 2044 5.004,07 3738 3,38% 22,40% 19,02% 180.872,49", true);

const top16 = [19, 35, 60, 94, 124, 140, 167, 183, 205, 221, 248, 272, 299, 310, 337, 353];
const low15 = [27, 43, 78, 116, 132, 159, 175, 191, 213, 230, 256, 280, 302, 329, 345];
document.getElementById("tiles").innerHTML = [...top16, ...low15].map(n => `<div>${n}</div>`).join("");

const icon = {
  r: '<path d="M6.500 1v11M2 7.500l4.500 4.500L11 7.500" stroke="#d83b32" stroke-width="1.700"/>',
  d: '<path d="M3 2l8 8M11.500 3v8h-8" stroke="#cf8a1f" stroke-width="2"/>',
  s: '<path d="M0 7h12M7 2.500L11.500 7 7 11.500" stroke="#cf8a1f" stroke-width="1.800"/>',
  v: '<path d="M1.500 8l3.500 3.500L12.500 4" stroke="#46a45c" stroke-width="1.400"/>'
};
const loja = "35 r 22.504,81|19 r 21.617,66|191 r 19.117,71|329 r 16.379,61|248 d 13.248,05|159 d 12.643,13|94 d 9.288,30|60 d 7.897,77|213 d 7.791,12|221 s 6.534,11|124 s 4.925,02|345 s 4.873,40|280 s 4.841,07|337 s 4.392,82|175 s 3.853,98|183 s 3.696,97|302 v 2.369,01|167 v 2.290,61|230 v 2.158,87|299 v 1.499,42|43 v 1.255,71|205 v 1.158,45|140 v 1.126,39|272 v 891,23|132 v 874,14|256 v 843,72|78 v 824,93";
document.getElementById("loja").innerHTML = loja.split("|").map((l, i) => {
  const [a, k, b] = l.split(" ");
  return `<div class="l-row${i % 2 ? " band" : ""}"><span>${a}</span><svg width="13" height="13" viewBox="0 0 13 13" fill="none">${icon[k]}</svg><span>${b}</span></div>`;
}).join("");

// Visual gallery: dark outlines, blue and grey fills.
const K = 'stroke="#3b3a39"', B = 'fill="#83beec" stroke="#0f62ac"', G = 'fill="#c8c6c4" stroke="#797775"';
const gallery = [
  `<path d="M.5 0v15.500H16" ${K}/><path d="M.5 2.500h4v4h-4zM.5 9.500h6v4h-6z" ${K}/><path d="M4.500 2.500h5v4h-5z" ${B}/><path d="M6.500 9.500h7v4h-7z" ${G}/>`,
  `<path d="M.5 0v15.500H16M3.500 11.500h4v4h-4zM10.500 8.500h4v7h-4z" ${K}/><path d="M3.500 5.500h4v6h-4z" ${B}/><path d="M10.500 2.500h4v6h-4z" ${G}/>`,
  `<path d="M.5 0v15.500H16M.5 9.500h9v4h-9z" ${K}/><path d="M.5 2.500h14v4H.500z" ${B}/>`,
  `<path d="M.5 0v15.500H16M9.500 5.500h4v10h-4z" ${K}/><path d="M3.500 1.500h4v14h-4z" ${B}/>`,
  `<path d="M3.500 2.500h4v13h-4z" ${B}/><path d="M9.500 2.500h4v13h-4z" ${G}/><path d="M.5 0v15.500H16M1 13l4-4 4 4 6-6" ${K}/>`,
  `<path d="M2.500 6.500h4v9h-4z" ${B}/><path d="M10.500 4.500h4v11h-4z" ${G}/><path d="M6.500 1.500h4v14h-4zM.5 0v15.500H16M1 12l4-3 4 4 6-6" ${K}/>`,
  `<path d="M.5 0v15.500H16M1 12l5-5 4 3 5-6" ${K}/><path d="M1 9l4-4 4 3 3-4 4 3" stroke="#1f7fc4"/>`,
  `<path d="M7 6l4-6 5 9v6H9z" ${G}/><path d="M.5 14.500V9L6 1l5 8v6z" fill="#fff" ${K}/><path d="M.5 15.500L5 9l3 2 3-4 4.500 8.500z" ${B}/>`,
  `<path d="M6 13.500H.500V.500h14v4M.500 3.500h14M3 6.500h4v2H3zM3 10.500h3" ${K}/><path d="M7.500 7.500h8l-3 4v4h-2v-4z" fill="#fff" ${K}/>`,
  `<circle cx="8" cy="8" r="7.500" fill="#fff" ${K}/><path d="M8 .500A7.500 7.500 0 0 1 13 13.500L8 8z" ${B}/>`,
  `<circle cx="8" cy="8" r="7" fill="#fff" stroke="#a3a19f"/><path d="M8 1a7 7 0 0 1 4 12.500L10 11a4 4 0 0 0-2-7z" fill="#83beec" stroke="#5aa5df"/><circle cx="8" cy="8" r="3.800" fill="#fff" stroke="#8a8886"/>`,
  `<path d="M.5.500h7v8h-7z" ${B}/><path d="M.5 8.500h7v7h-7z" ${B}/><path d="M7.500.500h8v15h-8zM7.500 5.500h8M11.500 5.500v10M11.500 10.500h4" ${K}/>`,
  `<circle cx="8" cy="6.500" r="5" fill="#d5e4d8" stroke="#3b3a39" stroke-width="1.300"/><path d="M6 4l3-1 2 3-3 2zM7 9l3 1" fill="#3d9b50" stroke="#3d9b50"/><path d="M2.500 3C1 9 5 13 10 12.500M8 13v2.500M4 15.500h8" ${K}/>`,
  `<path d="M.5 12a7.500 7.500 0 0 1 15 0h-4a3.500 3.500 0 0 0-7 0z" fill="#fff" ${K}/><path d="M8 4.500A7.500 7.500 0 0 1 15.500 12h-4a3.500 3.500 0 0 0-2-3z" ${B}/><path d="M8 12l2-5" ${K}/>`,
  `<path d="M.5 2.500h15v11H.500z" fill="#fff" ${K}/><text x="2" y="10.500" font-size="7" font-family="Liberation Sans" fill="#1f7fc4">123</text>`,
  `<path d="M.5.500h15v15H.500zM2.500 3v10" fill="#fff" ${K}/><path d="M5 4h8M5 8h5M5 12h7" stroke="#1469ad" stroke-width="2"/>`,
  `<path d="M.5.500h15v15H.500z" fill="#fff" ${K}/><path d="M1 1h14v3H1z" fill="#c8c6c4"/><path d="M.5 4.500h15M.500 8.500h15M.500 12h15M5.500 4v11M10.500 4v11" ${K}/>`,
  `<path d="M.5.500h15v15H.500z" fill="#fff" ${K}/><path d="M1 1h14v3H1z" fill="#c8c6c4"/><path d="M10.500 4.500h5v11h-10v-3.500h5z" ${B}/><path d="M.5 4.500h15M.500 8.500h15M.500 12h15M5.500 4v11M10.500 4v11" ${K}/>`
];
document.getElementById("gallery").innerHTML = gallery.map(g => `<svg width="16" height="16" viewBox="0 0 16 16" fill="none">${g}</svg>`).join("");
```
